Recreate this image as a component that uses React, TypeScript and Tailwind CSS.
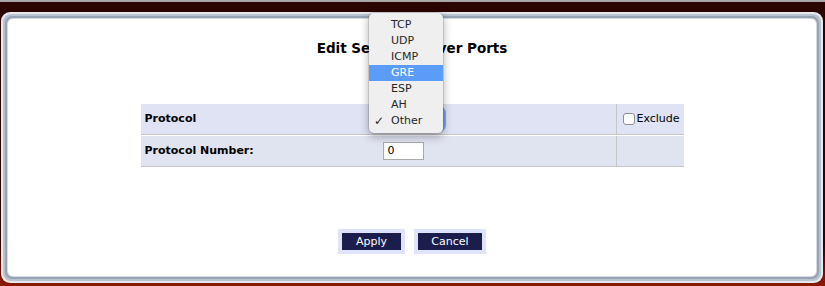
import React from "react";

const options = ["TCP", "UDP", "ICMP", "GRE", "ESP", "AH", "Other"];

const ProtocolMenu = () => {
  return (
    <div className="absolute left-[369px] top-[11px] w-[74px] rounded-[5px] bg-[#efefef] py-[4px] shadow-[0_3px_10px_rgba(0,0,0,0.35),0_0_0_1px_rgba(0,0,0,0.1)] text-[11px] text-[#262626]">
      {options.map((o) => (
        <div
          key={o}
          className={
            o === "GRE"
              ? "relative h-[16px] leading-[16px] pl-[22px] bg-[#5a9cf8] text-white"
              : "relative h-[16px] leading-[16px] pl-[22px]"
          }
        >
          {o === "Other" && <span className="absolute left-[5px] top-0 text-[12px]">✓</span>}
          {o}
        </div>
      ))}
    </div>
  );
};

const App = () => {
  return (
    <div
      className="relative w-[825px] h-[286px] overflow-hidden border-t-2 border-[#a8a8a8] bg-[linear-gradient(#2b0400,#2b0400_85%,#8a1a00)] pt-[10px] pl-[1px] pr-[2px] pb-[3px]"
      style={{ fontFamily: '"DejaVu Sans", Verdana, sans-serif' }}
    >
      <div className="h-full rounded-[9px] bg-[#e6eaef] p-[2px]">
        <div className="h-full rounded-[8px] bg-[#b9c2ce] p-[2px]">
          <div className="h-full rounded-[7px] bg-[#97a4b5] p-[2px]">
            <div className="h-full rounded-[6px] bg-[#d5dbe3] p-[1px]">
              <div className="h-full rounded-[5px] bg-white flex flex-col items-center pt-[21px]">
                <h1 className="text-[13.5px] font-bold leading-[17px] text-black">
                  Edit Service Server Ports
                </h1>

                <div className="mt-[47px] w-[543px] text-[11px] text-black">
                  <div className="grid grid-cols-[239px_236px_1px_67px] h-[31px] bg-[#dfe3f4] border-b border-[#c6c6c6] mb-[1px]">
                    <div className="flex items-center pl-[4px] font-bold">Protocol</div>
                    <div className="flex items-center pl-[3px]">
                      <div className="h-[20px] w-[60px] rounded-[4px] bg-white ring-[3px] ring-[#78a6ec]" />
                    </div>
                    <div className="bg-[#c6c6c6]" />
                    <div className="flex items-center pl-[6px] gap-[2px]">
                      <span className="w-[12px] h-[12px] rounded-[3px] border border-[#8e8e8e] bg-white" />
                      <span>Exclude</span>
                    </div>
                  </div>
                  <div className="grid grid-cols-[239px_236px_1px_67px] h-[31px] bg-[#e0e3f0] border-b border-[#c6c6c6]">
                    <div className="flex items-center pl-[4px] font-bold">Protocol Number:</div>
                    <div className="flex items-center pl-[3px]">
                      <div className="h-[18px] w-[41px] border border-[#a9a9a9] bg-white pl-[4px] text-[11px] leading-[16px]">
                        0
                      </div>
                    </div>
                    <div className="bg-[#c6c6c6]" />
                    <div />
                  </div>
                </div>

                <div className="mt-[62px] flex gap-[9px]">
                  <button className="w-[67px] h-[25px] border-[4px] border-[#dfe4fb] bg-[#1b1d4d] text-white text-[11px] leading-[17px]">
                    Apply
                  </button>
                  <button className="w-[72px] h-[25px] border-[4px] border-[#dfe4fb] bg-[#1b1d4d] text-white text-[11px] leading-[17px]">
                    Cancel
                  </button>
                </div>
              </div>
            </div>
          </div>
        </div>
      </div>
      <ProtocolMenu />
    </div>
  );
};

export default App;
